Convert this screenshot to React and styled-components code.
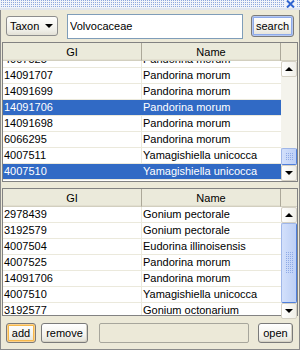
import React from "react";
import styled, { createGlobalStyle } from "styled-components";

const GlobalStyle = createGlobalStyle`
  html, body {
    margin: 0;
    padding: 0;
    background: #ece9d8;
  }
  body {
    font-family: "Liberation Sans", Arial, sans-serif;
    font-size: 11px;
    color: #000;
  }
`;

const topRows = [
  { gi: "4007525", name: "Pandorina morum" },
  { gi: "14091707", name: "Pandorina morum" },
  { gi: "14091699", name: "Pandorina morum" },
  { gi: "14091706", name: "Pandorina morum", selected: true },
  { gi: "14091698", name: "Pandorina morum" },
  { gi: "6066295", name: "Pandorina morum" },
  { gi: "4007511", name: "Yamagishiella unicocca" },
  { gi: "4007510", name: "Yamagishiella unicocca", selected: true },
];

const bottomRows = [
  { gi: "2978439", name: "Gonium pectorale" },
  { gi: "3192579", name: "Gonium pectorale" },
  { gi: "4007504", name: "Eudorina illinoisensis" },
  { gi: "4007525", name: "Pandorina morum" },
  { gi: "14091706", name: "Pandorina morum" },
  { gi: "4007510", name: "Yamagishiella unicocca" },
  { gi: "3192577", name: "Gonium octonarium" },
];

export default function App() {
  return (
    <>
      <GlobalStyle />
      <Window>
        <TitleBar>
          <CloseIcon width="9" height="8" viewBox="0 0 9 8">
            <path d="M1 0.5 L8 7.5 M8 0.5 L1 7.5" stroke="#2f63d0" strokeWidth="2" />
          </CloseIcon>
        </TitleBar>

        <Frame>
          {/* ============ search bar */}
          <Toolbar>
            <Combo>
              <span>Taxon</span>
              <ComboArrow />
            </Combo>
            <SearchField defaultValue="Volvocaceae" />
            <Button $focus="blue">search</Button>
          </Toolbar>

          {/* ============ result table */}
          <TablePane $height={140}>
            <Header>
              <HeadCell>GI</HeadCell>
              <HeadCell>Name</HeadCell>
              <HeadCorner />
            </Header>
            <Body>
              <Rows $offset={-9}>
                {topRows.map((r, i) => (
                  <Row key={i} $selected={r.selected}>
                    <Cell>{r.gi}</Cell>
                    <Cell>{r.name}</Cell>
                  </Row>
                ))}
              </Rows>
              <ScrollBar>
                <ArrowButton $dir="up" />
                <Track>
                  <Spacer />
                  <Thumb $size={17}>
                    <Grip $h={8} />
                  </Thumb>
                </Track>
                <ArrowButton $dir="down" />
              </ScrollBar>
            </Body>
          </TablePane>

          <Splitter />

          {/* ============ selection table */}
          <TablePane $height={128}>
            <Header>
              <HeadCell>GI</HeadCell>
              <HeadCell>Name</HeadCell>
              <HeadCorner />
            </Header>
            <Body>
              <Rows $offset={0}>
                {bottomRows.map((r, i) => (
                  <Row key={i} $selected={r.selected}>
                    <Cell>{r.gi}</Cell>
                    <Cell>{r.name}</Cell>
                  </Row>
                ))}
              </Rows>
              <ScrollBar>
                <ArrowButton $dir="up" />
                <Track>
                  <Thumb $size={80}>
                    <Grip $h={22} />
                  </Thumb>
                </Track>
                <ArrowButton $dir="down" />
              </ScrollBar>
            </Body>
          </TablePane>

          {/* ============ bottom buttons */}
          <BottomBar>
            <Button $focus="orange" $w={30}>add</Button>
            <Button $w={47} style={{ marginLeft: 5 }}>remove</Button>
            <StatusField />
            <Button $w={35}>open</Button>
          </BottomBar>
        </Frame>
      </Window>
    </>
  );
}

const Window = styled.div`
  width: 300px;
  height: 350px;
  display: flex;
  flex-direction: column;
  overflow: hidden;
  background: #ece9d8;
`;

const TitleBar = styled.div`
  height: 8px;
  flex: none;
  display: flex;
  justify-content: flex-end;
  align-items: center;
  padding-right: 4px;
  background-color: #f1f4fb;
  background-image: conic-gradient(#8ea7dc 0 25%, transparent 0);
  background-size: 2px 2px;
  border-bottom: 2px solid #dfe4ee;
`;

const CloseIcon = styled.svg`
  display: block;
  background: #f1f4fb;
  padding: 0 1px;
`;

const Frame = styled.div`
  flex: 1;
  display: flex;
  flex-direction: column;
  border-left: 1px solid #8a8a8a;
  border-right: 1px solid #8a8a8a;
  border-bottom: 1px solid #8a8a8a;
  padding: 0 1px;
  min-height: 0;
`;

const Toolbar = styled.div`
  height: 32px;
  flex: none;
  display: flex;
  align-items: center;
  padding-left: 4px;
`;

const Combo = styled.div`
  width: 52px;
  height: 20px;
  box-sizing: border-box;
  border: 1px solid #8d8d8d;
  border-radius: 3px;
  background: linear-gradient(#fefefd, #f1f0ea 70%, #e3e1d6);
  display: flex;
  align-items: center;
  justify-content: space-between;
  padding: 0 4px 0 3px;
  font-size: 11px;
`;

const ComboArrow = styled.i`
  width: 0;
  height: 0;
  border-left: 4px solid transparent;
  border-right: 4px solid transparent;
  border-top: 4px solid #000;
`;

const SearchField = styled.input`
  width: 176px;
  height: 25px;
  box-sizing: border-box;
  margin-left: 9px;
  border: 1px solid #7f9db9;
  background: #fff;
  font-family: "Liberation Sans", Arial, sans-serif;
  font-size: 11px;
  padding: 0 2px;
  outline: none;
`;

const Button = styled.button`
  width: ${(p) => (p.$w ? `${p.$w}px` : "43px")};
  height: ${(p) => (p.$w ? "20px" : "22px")};
  box-sizing: border-box;
  margin-left: ${(p) => (p.$w ? "0" : "8px")};
  padding: 0;
  border: 1px solid #7a7a7a;
  border-radius: 3px;
  background: linear-gradient(#ffffff, #f4f3ee 60%, #e2e0d6);
  font-family: "Liberation Sans", Arial, sans-serif;
  font-size: 11px;
  color: #000;
  box-shadow: ${(p) =>
    p.$focus === "blue"
      ? "inset 0 0 0 1px #b5c8f2, inset 0 0 0 2px #8eaaea"
      : p.$focus === "orange"
      ? "inset 0 0 0 1px #fcd28e, inset 0 0 0 2px #f5b84a"
      : "inset -1px -1px 0 #d6d3c5"};
`;

const TablePane = styled.div`
  height: ${(p) => p.$height}px;
  flex: none;
  box-sizing: border-box;
  border: 1px solid #828282;
  display: flex;
  flex-direction: column;
  background: #fff;
`;

const Header = styled.div`
  height: 18px;
  flex: none;
  display: grid;
  grid-template-columns: 139px 139px 16px;
  background: #ebeadb;
`;

const HeadCell = styled.div`
  box-sizing: border-box;
  border-right: 1px solid #aca899;
  border-bottom: 1px solid #d2cfbf;
  box-shadow: inset 0 -1px #e2dfd0;
  display: flex;
  align-items: center;
  justify-content: center;
  font-size: 11px;
`;

const HeadCorner = styled.div`
  background: #ece9d8;
  border-bottom: 1px solid #d2cfbf;
`;

const Body = styled.div`
  flex: 1;
  display: flex;
  min-height: 0;
`;

const Rows = styled.div`
  width: 278px;
  overflow: hidden;
  display: flex;
  flex-direction: column;
  & > :first-child {
    margin-top: ${(p) => p.$offset}px;
  }
`;

const Row = styled.div`
  height: 16px;
  flex: none;
  display: grid;
  grid-template-columns: 139px 139px;
  box-sizing: border-box;
  border-bottom: 1px solid #ebe9dc;
  background: ${(p) => (p.$selected ? "#316ac5" : "#fff")};
  color: ${(p) => (p.$selected ? "#fff" : "#000")};
  & > :first-child {
    border-right: 1px solid ${(p) => (p.$selected ? "#316ac5" : "#ebe9dc")};
  }
`;

const Cell = styled.div`
  box-sizing: border-box;
  padding-left: 1px;
  line-height: 15px;
  white-space: nowrap;
  overflow: hidden;
`;

const ScrollBar = styled.div`
  width: 16px;
  display: flex;
  flex-direction: column;
  background: #f3f1ea;
`;

const ArrowButton = styled.div`
  height: 16px;
  flex: none;
  box-sizing: border-box;
  border: 1px solid #d4d0c4;
  border-radius: 2px;
  background: linear-gradient(to right, #ffffff, #f0efe8);
  display: flex;
  align-items: center;
  justify-content: center;
  &::after {
    content: "";
    width: 0;
    height: 0;
    border-left: 4px solid transparent;
    border-right: 4px solid transparent;
    ${(p) =>
      p.$dir === "up"
        ? "border-bottom: 4px solid #000;"
        : "border-top: 4px solid #000;"}
  }
`;

const Track = styled.div`
  flex: 1;
  display: flex;
  flex-direction: column;
  background: #f4f3ec;
`;

const Spacer = styled.div`
  flex: 1;
`;

const Thumb = styled.div`
  height: ${(p) => p.$size}px;
  flex: none;
  box-sizing: border-box;
  border: 1px solid #9fb6e8;
  border-right-color: #4f7fdb;
  border-bottom-color: #4f7fdb;
  border-radius: 2px;
  background: linear-gradient(to right, #d3e0fb, #bccff6);
  display: flex;
  align-items: center;
  justify-content: center;
`;

const Grip = styled.div`
  width: 8px;
  height: ${(p) => p.$h}px;
  background-image: conic-gradient(#8faae6 0 25%, transparent 0);
  background-size: 2px 2px;
`;

const Splitter = styled.div`
  height: 6px;
  flex: none;
  background: #ece9d8;
`;

const BottomBar = styled.div`
  flex: 1;
  display: flex;
  align-items: center;
  padding-left: 4px;
`;

const StatusField = styled.div`
  width: 150px;
  height: 20px;
  box-sizing: border-box;
  margin: 0 9px 0 11px;
  border: 1px solid #a7a69c;
  border-radius: 2px;
  background: #ece9d8;
`;
